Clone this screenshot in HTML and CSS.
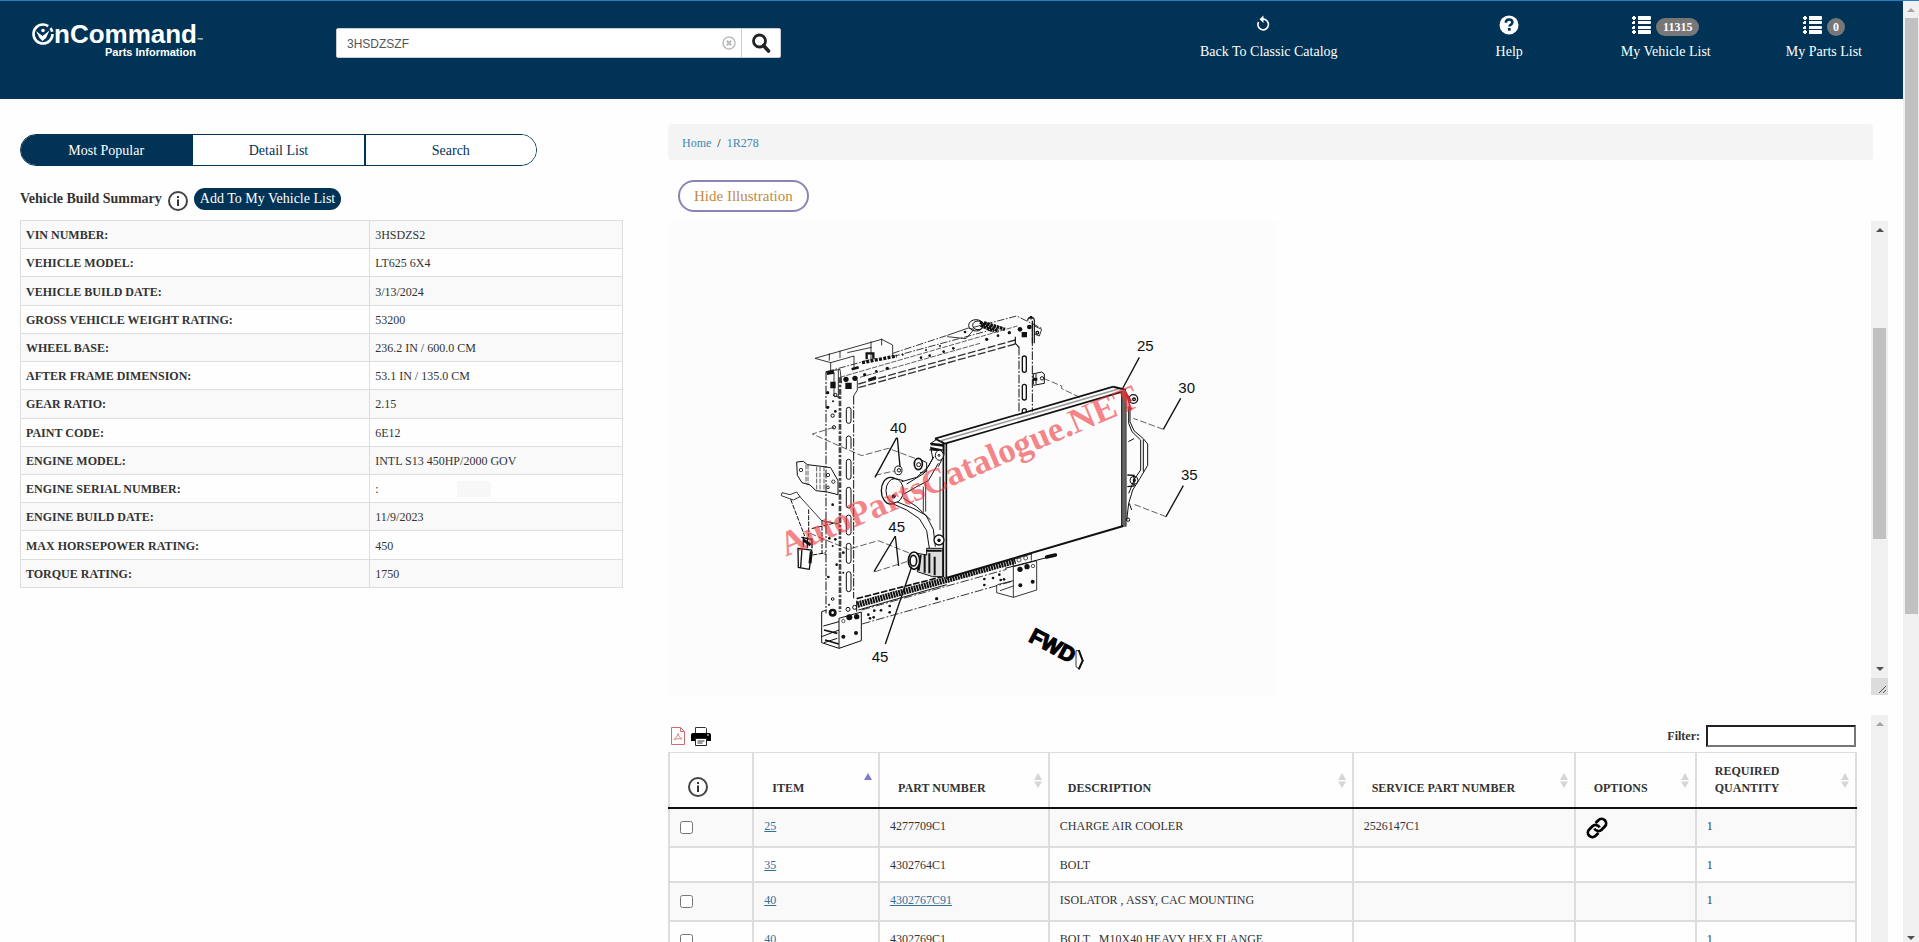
FILE: index.html
```html
<!DOCTYPE html>
<html lang="en">
<head>
<meta charset="utf-8">
<title>OnCommand Parts Information</title>
<link rel="stylesheet" href="styles.css">
</head>
<body>
<svg width="0" height="0" class="defs" aria-hidden="true">
  <symbol id="i-info" viewBox="0 0 20 20"><circle cx="10" cy="10" r="9" fill="#fff" stroke="#444" stroke-width="2"/><path d="M9 8.500h2v6.500h-2zM9 5h2v2h-2z" fill="#333"/></symbol>
  <symbol id="i-list" viewBox="0 0 20 18"><path d="M1 0h2v1h1v2h-1v1h-2v-1h-1v-2h1zM6 0h12q1 0 1 1v2q0 1-1 1h-12zM1 5h2v3h-3v-2h1zM6 5h12q1 0 1 1v1q0 1-1 1h-12zM1 10h2v3h-3v-2h1zM6 10h12q1 0 1 1v1q0 1-1 1h-12zM1 14h2v1h1v2h-1v1h-2v-1h-1v-2h1zM6 14h12q1 0 1 1v2q0 1-1 1h-12z" fill="#fff"/></symbol>
  <symbol id="i-sort" viewBox="0 0 8 15"><path d="M4 0l4 7h-8zM0 8.500h8l-4 6.500z" fill="#d5d5d5"/></symbol>
  <symbol id="i-up" viewBox="0 0 8 4"><path d="M4 0l4 4h-8z" fill="currentColor"/></symbol>
  <symbol id="i-down" viewBox="0 0 8 4"><path d="M0 0h8l-4 4z" fill="currentColor"/></symbol>
</svg>
<div class="shell">
  <div class="page">
    <header class="top">
      <a class="logo" href="#" aria-label="OnCommand Parts Information">
        <span class="logo-row">
          <svg width="22" height="22" viewBox="0 0 22 22"><circle cx="11" cy="11" r="9.500" fill="none" stroke="#fff" stroke-width="2.600" stroke-dasharray="50 3 4 3"/><circle cx="11" cy="7.500" r="1.800" fill="#fff"/><path d="M4 8l6.500 5 7-5.500-3.500 7.500-3.500 3-3-3z" fill="#fff"/></svg><span class="logo-name">nCommand</span><span class="logo-tm">™</span>
        </span>
        <span class="logo-sub">Parts Information</span>
      </a>
      <form class="search">
        <input type="text" value="3HSDZSZF" aria-label="Search">
        <button type="button" class="clear" aria-label="Clear"><svg width="14" height="14" viewBox="0 0 14 14" fill="none" stroke="#bbb"><circle cx="7" cy="7" r="6" stroke-width="1.500"/><path d="M4.800 4.800l4.400 4.400M9.200 4.800l-4.400 4.400" stroke-width="2"/></svg></button>
        <button type="button" class="go" aria-label="Go"><svg width="20" height="20" viewBox="0 0 20 20" fill="none" stroke="#222"><circle cx="8.500" cy="8" r="6" stroke-width="2.800"/><path d="M12.500 12.500l5 5.500" stroke-width="3.600" stroke-linecap="round"/></svg></button>
      </form>
      <nav class="links">
        <a href="#"><span class="ico"><svg width="14" height="17" viewBox="0 0 14 17"><path d="M2.500 7a5.300 5.300 0 1 0 4.500-2.800" fill="none" stroke="#fff" stroke-width="1.700"/><path d="M7.500 .500v7.500l-4-3.700z" fill="#fff"/></svg></span>Back To Classic Catalog</a>
        <a href="#" class="help"><span class="ico"><svg width="20" height="20" viewBox="0 0 20 20"><circle cx="10" cy="10" r="9.500" fill="#fff"/><path d="M6.800 7.800q0-3.400 3.300-3.400t3.300 2.800q0 1.500-1.500 2.400t-1.500 2" fill="none" stroke="#003355" stroke-width="2.500"/><path d="M8.900 13h2.800v2.700h-2.800z" fill="#003355"/></svg></span>Help</a>
        <a href="#" class="vehicles"><span class="ico"><svg width="20" height="18"><use href="#i-list"/></svg><b class="badge">11315</b></span>My Vehicle List</a>
        <a href="#" class="parts"><span class="ico"><svg width="20" height="18"><use href="#i-list"/></svg><b class="badge">0</b></span>My Parts List</a>
      </nav>
    </header>
    <main class="cols">
      <section class="left">
        <div class="tabs">
          <button type="button" class="on">Most Popular</button><button type="button">Detail List</button><button type="button">Search</button>
        </div>
        <div class="summary">
          <h2>Vehicle Build Summary</h2>
          <svg width="20" height="20"><use href="#i-info"/></svg>
          <button type="button">Add To My Vehicle List</button>
        </div>
        <table class="build">
          <tr><th scope="row">VIN NUMBER:</th><td>3HSDZS2</td></tr>
          <tr><th scope="row">VEHICLE MODEL:</th><td>LT625 6X4</td></tr>
          <tr><th scope="row">VEHICLE BUILD DATE:</th><td>3/13/2024</td></tr>
          <tr><th scope="row">GROSS VEHICLE WEIGHT RATING:</th><td>53200</td></tr>
          <tr><th scope="row">WHEEL BASE:</th><td>236.2 IN / 600.0 CM</td></tr>
          <tr><th scope="row">AFTER FRAME DIMENSION:</th><td>53.1 IN / 135.0 CM</td></tr>
          <tr><th scope="row">GEAR RATIO:</th><td>2.15</td></tr>
          <tr><th scope="row">PAINT CODE:</th><td>6E12</td></tr>
          <tr><th scope="row">ENGINE MODEL:</th><td>INTL S13 450HP/2000 GOV</td></tr>
          <tr><th scope="row">ENGINE SERIAL NUMBER:</th><td><div class="masked">:<i></i></div></td></tr>
          <tr><th scope="row">ENGINE BUILD DATE:</th><td>11/9/2023</td></tr>
          <tr><th scope="row">MAX HORSEPOWER RATING:</th><td>450</td></tr>
          <tr><th scope="row">TORQUE RATING:</th><td>1750</td></tr>
        </table>
      </section>
      <section class="right">
        <nav class="crumbs"><a href="#">Home</a><span>/</span><a href="#">1R278</a></nav>
        <button type="button" class="hide">Hide Illustration</button>
        <div class="viewer">
          <svg class="art" width="609" height="474" viewBox="-276 -207 1827 1422" fill="none" stroke="#111" stroke-width="3">
            <!-- top rail -->
            <path d="M165 205L365 148L398 165V196M165 205L212 218L282 198M212 218V245M262 188L335 172M282 198V232M208 190V212M240 182V204M333 154V210M365 146V166" stroke-width="2.500"/>
            <path d="M398 190L562 136M640 112L770 78L845 115M200 245L345 205M398 200L700 118" stroke-dasharray="22 5 5 5" stroke-width="2.500"/>
            <path d="M240 262L772 108M300 262L660 160" stroke-dasharray="16 4" stroke-width="2"/>
            <path d="M295 282L766 150M295 293L766 162" stroke-dasharray="24 7" stroke-width="4" stroke="#333"/>
            <path d="M562 136L625 114L642 118L618 146L562 140" stroke-width="2.500"/>
            <ellipse cx="648" cy="106" rx="22" ry="17"/><ellipse cx="654" cy="106" rx="16" ry="13"/><path d="M660 97L716 124M662 106L702 124M672 98L735 118" stroke-width="10" stroke-dasharray="8 2"/>
            <path d="M306 218L410 198" stroke-width="10" stroke-dasharray="9 4"/><path d="M320 208V190H340V206" stroke-width="7"/>
            <path d="M275 238L296 232M325 270L348 262" stroke-width="8"/>
            <g fill="#111" stroke="none"><circle cx="314" cy="254" r="5"/><circle cx="349" cy="244" r="4"/><circle cx="382" cy="235" r="5"/><circle cx="428" cy="194" r="3"/><circle cx="483" cy="203" r="4"/><circle cx="509" cy="197" r="4"/><circle cx="551" cy="185" r="4"/><circle cx="580" cy="175" r="4"/><circle cx="498" cy="180" r="3"/><circle cx="540" cy="168" r="3"/><circle cx="615" cy="126" r="4"/><circle cx="680" cy="148" r="5"/><circle cx="714" cy="137" r="4"/><circle cx="748" cy="128" r="5"/><circle cx="258" cy="268" r="8"/><circle cx="285" cy="265" r="8"/><path d="M256 278h19v19h-19zM211 275h16v20h-16zM785 126h16v16h-16z"/><circle cx="780" cy="118" r="7"/><circle cx="808" cy="111" r="7"/></g>
            <!-- left post -->
            <path d="M198 245V970M281 318V925" stroke-dasharray="26 5 6 5"/>
            <path d="M240 262V965" stroke-width="8" stroke-dasharray="17 5 8 5" stroke="#444"/>
            <path d="M235 240V325M222 248V318L240 322M198 245L240 238L245 280M292 270V300L281 318" stroke-width="2.500"/>
            <path d="M200 250L222 246" stroke-width="10"/>
            <g stroke-width="3"><rect x="259" y="352" width="14" height="48" rx="7"/><path d="M259 476V445a7 7 0 0 1 14 0V476"/><rect x="259" y="508" width="14" height="60" rx="7"/><rect x="259" y="592" width="14" height="62" rx="7"/><rect x="259" y="675" width="14" height="60" rx="7"/><rect x="259" y="760" width="14" height="60" rx="7"/><rect x="259" y="845" width="14" height="60" rx="7"/><circle cx="218" cy="377" r="5"/><circle cx="222" cy="412" r="5"/><circle cx="226" cy="315" r="5"/><circle cx="264" cy="958" r="6"/><circle cx="284" cy="952" r="6"/><circle cx="218" cy="927" r="4"/></g>
            <g fill="#111" stroke="none"><circle cx="203" cy="308" r="5"/><circle cx="203" cy="352" r="5"/><circle cx="226" cy="364" r="4"/><circle cx="219" cy="334" r="3"/><circle cx="218" cy="644" r="4"/><circle cx="208" cy="745" r="4"/><circle cx="226" cy="748" r="4"/><circle cx="218" cy="768" r="3"/><circle cx="250" cy="788" r="4"/><circle cx="230" cy="824" r="4"/><circle cx="205" cy="861" r="4"/><circle cx="250" cy="848" r="3"/><circle cx="207" cy="944" r="3"/></g>
            <!-- left brackets -->
            <path d="M110 516L130 514L142 524L192 530L212 533L234 572V614L202 606L168 602L150 585L126 578L112 556Z"/>
            <path d="M138 524V582M144 524V582M170 530V600M180 530V602M192 530V604" stroke-width="2" stroke-dasharray="14 4"/>
            <g stroke-width="2.500"><circle cx="123" cy="540" r="5"/><circle cx="204" cy="555" r="5"/><circle cx="220" cy="575" r="5"/><circle cx="204" cy="592" r="4"/></g>
            <path d="M66 608L90 614L110 606L120 620L100 630L64 617ZM118 618L185 692L238 702" stroke-width="2.500"/>
            <path d="M92 628L134 738M146 658V740M186 690V790L198 794M155 716L220 700M158 795L198 788" stroke-dasharray="14 4"/>
            <path d="M114 775L155 780L148 838L115 832ZM126 775L122 832M124 742L156 748V775M130 740V770M142 742V775" stroke-width="4"/><path d="M130 750L152 765M154 784L150 820" stroke-width="9"/>
            <!-- bottom rail -->
            <path d="M290 926L555 858" stroke-width="5" stroke-dasharray="20 5"/>
            <path d="M292 944L766 812" stroke-width="19" stroke-dasharray="6 2"/>
            <path d="M295 960L560 884M290 932V965"/>
            <path d="M305 960L740 838M306 1002L760 873" stroke-dasharray="26 6 6 6" stroke-width="2.500"/>
            <g fill="#111" stroke="none"><circle cx="325" cy="974" r="4"/><circle cx="343" cy="962" r="4"/><circle cx="330" cy="985" r="4"/><circle cx="341" cy="982" r="4"/><circle cx="363" cy="961" r="4"/><circle cx="389" cy="948" r="4"/><circle cx="389" cy="967" r="4"/><circle cx="530" cy="926" r="5"/><circle cx="673" cy="867" r="4"/><circle cx="673" cy="885" r="4"/><circle cx="699" cy="864" r="4"/><circle cx="718" cy="854" r="4"/><circle cx="722" cy="870" r="4"/><circle cx="732" cy="868" r="4"/></g>
            <!-- left foot -->
            <path d="M185 965V1058L237 1075L304 1052V966M185 965L200 960M237 985V1075M237 985L304 966M185 1040L237 1020M190 1008L237 995M192 1058L232 1045"/>
            <path d="M192 1020L232 1030M195 1050L236 1062" stroke-width="5"/>
            <circle cx="218" cy="968" r="8" stroke-width="8"/>
            <g fill="#111" stroke="none"><circle cx="268" cy="982" r="9"/><circle cx="290" cy="980" r="8"/><circle cx="250" cy="1040" r="6"/><circle cx="288" cy="1029" r="6"/></g><circle cx="250" cy="993" r="5" stroke-width="2"/>
            <!-- right post -->
            <path d="M777 170V368M817 100V365" stroke-dasharray="26 5 6 5"/><path d="M766 140V160L777 172M817 160V92M803 92a10 10 0 1 1 20 0V160" stroke-width="3.500"/>
            <circle cx="813" cy="83" r="4"/><path d="M823 108L845 118L838 138L822 132" stroke-width="2.500"/><circle cx="832" cy="128" r="4" stroke-width="4"/>
            <g stroke-width="4"><rect x="787" y="198" width="12" height="49" rx="6"/><rect x="787" y="283" width="12" height="47" rx="6"/><path d="M787 370V362a6 6 0 0 1 12 0V368"/></g>
            <path d="M817 252L845 246L853 252V280L820 286M820 252V284M828 252V282"/><path d="M818 268h14" stroke-width="9"/><circle cx="846" cy="265" r="5"/>
            <!-- right foot -->
            <path d="M760 808V922L830 900V812L760 830M710 885V908L760 922M712 884L760 872M760 808L814 792V812M720 902L760 888" stroke-width="2.500"/>
            <g fill="#111" stroke="none"><circle cx="780" cy="838" r="8"/><circle cx="801" cy="830" r="8"/><circle cx="781" cy="886" r="6"/><circle cx="818" cy="875" r="6"/></g>
            <circle cx="777" cy="810" r="6" stroke-width="2"/><circle cx="797" cy="804" r="6" stroke-width="2"/><circle cx="819" cy="828" r="5" stroke-width="2"/>
            <path d="M735 835L860 803"/><path d="M860 801L886 795" stroke-width="11" stroke-linecap="round"/>
            <!-- cooler core -->
            <path d="M556 458L1090 302V708L556 866Z" fill="#fcfcfc" stroke="none"/>
            <path d="M525 446L1060 290M555 461L1090 304M525 446L555 461" stroke-width="5"/><path d="M540 453L1075 297" stroke="#999" stroke-width="5"/>
            <path d="M1060 290L1098 300" stroke-width="6"/>
            <path d="M550 458V862M559 460V866" stroke-width="5"/>
            <path d="M1091 302V710" stroke="#666" stroke-width="12"/><path d="M1085 304V708M1098 304V710"/>
            <path d="M559 864L1090 708" stroke-width="6"/>
            <!-- right tank -->
            <path d="M1100 312L1110 350V395L1122 422L1150 446L1163 462V526L1140 565L1118 600L1106 640L1100 692M1106 350V400L1116 425L1142 450V540L1124 566L1106 610M1150 448V545" stroke-width="3"/>
            <circle cx="1120" cy="327" r="13" stroke-width="4"/><circle cx="1122" cy="328" r="4" stroke-width="4"/><path d="M1102 555L1122 556V588L1102 590" stroke-width="4"/><circle cx="1122" cy="571" r="12"/><circle cx="1123" cy="571" r="3" stroke-width="4"/><circle cx="1104" cy="689" r="5"/><path d="M1105 455L1122 446M1108 640L1115 660"/>
            <path d="M1095 308L1112 335M1105 350L1114 360" stroke="#c22" stroke-width="9"/>
            <!-- left tank -->
            <path d="M510 462L530 448L552 458V495L535 530M508 480H550M512 470L518 505L505 530L470 562L425 575M535 520L505 572L470 590L432 612M522 500L492 550L440 582"/>
            <path d="M512 475L545 482M512 462L550 466" stroke-width="8"/><ellipse cx="538" cy="496" rx="12" ry="15" fill="#fcfcfc"/><circle cx="537" cy="496" r="3"/>
            <ellipse cx="392" cy="602" rx="28" ry="40" fill="#fcfcfc" stroke-width="4"/><ellipse cx="404" cy="602" rx="26" ry="36" fill="#fcfcfc"/><path d="M392 562L430 572M400 642L440 660L478 686L500 722L508 775M412 636L462 656L498 676L520 718L526 770M430 624L470 650L512 690" />
            <circle cx="401" cy="619" r="5" fill="#111"/><path d="M490 590V668M497 580V665M540 560V720" stroke-width="2.500"/>
            <ellipse cx="475" cy="522" rx="12" ry="17" fill="#fcfcfc" stroke-width="5"/><circle cx="476" cy="524" r="6"/><path d="M484 510L500 518V545L480 548"/><ellipse cx="415" cy="541" rx="11" ry="13" fill="#fcfcfc"/><circle cx="417" cy="541" r="5"/>
            <circle cx="537" cy="750" r="15" fill="#fcfcfc" stroke-width="4"/><circle cx="537" cy="751" r="4" fill="#111"/>
            <path d="M500 775h48v85h-30L472 845V790L500 795Z" fill="#ddd"/><path d="M482 795L476 842M494 792V848M508 790V850M524 800V856M500 782H545" stroke-width="6"/>
            <ellipse cx="462" cy="812" rx="17" ry="26" fill="#fcfcfc" stroke-width="5"/><ellipse cx="460" cy="812" rx="10" ry="16" stroke-width="5"/>
            <!-- callout leaders -->
            <path d="M222 412L157 432L305 497L385 475L470 507M345 556L402 543M150 730L265 778L355 752L450 790M345 845L450 812M850 265L905 288V296L960 322M1210 418L1120 385M1218 680L1120 642" stroke-dasharray="20 7" stroke-width="2"/>
            <path d="M410 443L345 562M412 443L420 530M1138 202L1087 297M1262 325L1210 418M1270 587L1218 680M406 738L342 845M406 738L416 828M455 830L376 1062" stroke-width="4"/>
            <path d="M948 1082V1130L958 1137L969 1112L958 1082Z" stroke-width="2.500"/><path d="M956 1080L968 1112L956 1138" stroke-width="6"/>
            <g class="nums" stroke="none"><text x="390" y="428">40</text><text x="1131" y="184">25</text><text x="1255" y="308">30</text><text x="1263" y="569">35</text><text x="385" y="725">45</text><text x="335" y="1115">45</text></g>
            <text class="fwd" transform="translate(803 1052) rotate(28)">FWD</text>
            <text class="mark" transform="translate(77 800) rotate(-23)">AutoPartsCatalogue.NET</text>
          </svg>
          <div class="side">
            <div class="bar"><svg width="8" height="4"><use href="#i-up"/></svg><div class="thumb mid"></div><svg width="8" height="4"><use href="#i-down"/></svg></div>
            <div class="grip"><svg width="17" height="17" viewBox="0 0 17 17" stroke="#555"><path d="M8 15l7-7M12 15l3-3"/></svg></div>
          </div>
        </div>
        <div class="list">
          <div class="list-body">
            <div class="tools">
              <a href="#" aria-label="PDF"><svg width="14" height="18" viewBox="0 0 14 18" fill="none" stroke="#cf6b6e"><path d="M.500 .500h9l4 4v13h-13zM9.500 .500v4h4"/><path d="M3 12.500q3-2 4-6q0 3 4 5.500q-4-1-8 .500z" stroke-width=".8"/></svg></a>
              <a href="#" aria-label="Print"><svg width="20" height="19" viewBox="0 0 20 19"><path d="M4.500 6v-5.500h10l1 1v5" fill="#fff" stroke="#333"/><path d="M2 6h16q2 0 2 2v6h-20v-6q0-2 2-2z"/><path d="M4.500 11.500h11v7h-11z" fill="#fff" stroke="#222"/><path d="M6.500 14h7M6.500 16h5" stroke="#333"/><path d="M16 8h2" stroke="#fff"/></svg></a>
              <label for="filter">Filter:</label><input id="filter" type="text">
            </div>
            <table class="partlist">
              <colgroup><col class="c1"><col class="c2"><col class="c3"><col class="c4"><col class="c5"><col class="c6"><col class="c7"></colgroup>
              <thead><tr>
                <th scope="col"><svg class="inf" width="20" height="20"><use href="#i-info"/></svg></th>
                <th scope="col">ITEM<svg class="sort" width="8" height="15" viewBox="0 0 8 15"><path d="M4 0l4 7h-8z" fill="#7b7bd0"/></svg></th>
                <th scope="col">PART NUMBER<svg class="sort" width="8" height="15"><use href="#i-sort"/></svg></th>
                <th scope="col">DESCRIPTION<svg class="sort" width="8" height="15"><use href="#i-sort"/></svg></th>
                <th scope="col">SERVICE PART NUMBER<svg class="sort" width="8" height="15"><use href="#i-sort"/></svg></th>
                <th scope="col">OPTIONS<svg class="sort" width="8" height="15"><use href="#i-sort"/></svg></th>
                <th scope="col">REQUIRED<br>QUANTITY<svg class="sort" width="8" height="15"><use href="#i-sort"/></svg></th>
              </tr></thead>
              <tbody>
                <tr><td><input type="checkbox" aria-label="Select 4277709C1"></td><td><a href="#">25</a></td><td>4277709C1</td><td>CHARGE AIR COOLER</td><td>2526147C1</td><td><svg class="chain" width="24" height="24" viewBox="0 0 24 24" fill="none" stroke="#000" stroke-width="2.800"><g transform="rotate(-45 12 12)"><path d="M9.500 16.500h-4a4.500 4.500 0 0 1 0-9h4.500a4.500 4.500 0 0 1 4.200 6"/><path d="M14.500 7.500h4a4.500 4.500 0 0 1 0 9h-4.500a4.500 4.500 0 0 1-4.200-6"/></g></svg></td><td>1</td></tr>
                <tr><td></td><td><a href="#">35</a></td><td>4302764C1</td><td>BOLT</td><td></td><td></td><td>1</td></tr>
                <tr><td><input type="checkbox" aria-label="Select 4302767C91"></td><td><a href="#">40</a></td><td><a href="#">4302767C91</a></td><td>ISOLATOR , ASSY, CAC MOUNTING</td><td></td><td></td><td>1</td></tr>
                <tr><td><input type="checkbox" aria-label="Select 4302769C1"></td><td><a href="#">40</a></td><td>4302769C1</td><td>BOLT , M10X40 HEAVY HEX FLANGE</td><td></td><td></td><td>1</td></tr>
              </tbody>
            </table>
          </div>
          <div class="bar faint"><svg width="8" height="4"><use href="#i-up"/></svg></div>
        </div>
      </section>
    </main>
  </div>
  <div class="bar window"><svg class="pale" width="8" height="4"><use href="#i-up"/></svg><div class="thumb main"></div><svg class="end" width="8" height="4"><use href="#i-down"/></svg></div>
</div>
</body>
</html>
```
FILE: styles.css
```css
* { box-sizing: border-box; }
body { margin: 0; font: 14px/20px "Liberation Serif", serif; color: #333; background: #fefefe; }
button, input { font: inherit; color: inherit; margin: 0; }
svg { display: block; flex: none; }
a { color: #337099; }
.defs { position: absolute; }
.shell { display: flex; height: 100vh; overflow: hidden; border-top: 1px solid #2a7cc0; }
.page { flex: 1; min-width: 0; }

.top { display: flex; align-items: flex-start; height: 98px; background: #003355; padding: 0 41px 0 32px; }
.logo { display: block; width: 304px; padding-top: 20px; color: #fff; text-decoration: none; font-family: "Liberation Sans", sans-serif; font-weight: bold; }
.logo-row { display: flex; align-items: flex-end; height: 25px; }
.logo-row svg { align-self: center; }
.logo-name { font-size: 26px; line-height: 24px; }
.logo-tm { font-size: 6px; line-height: 12px; }
.logo-sub { display: block; width: 164px; text-align: right; font-size: 11px; line-height: 13px; }
.search { display: flex; width: 445px; height: 30px; margin-top: 27px; background: #fff; border: 1px solid #ccc; border-radius: 2px; align-items: center; }
.search input { flex: 1; min-width: 0; border: 0; outline: 0; background: none; padding: 2px 10px 0; font: 12px "Liberation Sans", sans-serif; color: #555; }
.search button { border: 0; background: none; padding: 0; }
.search .clear { margin-right: 5px; }
.search .go { width: 39px; height: 28px; border-left: 1px solid #ccc; padding-left: 9px; }
.links { display: flex; margin-left: auto; }
.links a { color: #fff; text-decoration: none; text-align: center; }
.links .ico { display: flex; align-items: center; justify-content: center; height: 32px; margin: 8px 0 1px; gap: 4px; }
.links a:first-child .ico { padding: 0 12px 4px 0; }
.links .help { margin-left: 158px; }
.links .vehicles { margin-left: 98px; }
.links .parts { margin-left: 75px; }
.badge { background: #777; border-radius: 10px; font-size: 12px; line-height: 18px; padding: 0 7px; margin-top: 4px; }
.links .parts .badge { padding: 0 6px; }

.cols { display: grid; grid-template-columns: 603fr 1220fr; column-gap: 45px; padding: 0 15px 0 20px; }
.left { padding-top: 35px; }
.tabs { display: flex; width: 86%; max-width: 517px; height: 32px; border: 1px solid #003355; border-radius: 16px; overflow: hidden; }
.tabs button { flex: 1; border: 0; border-left: 2px solid #003355; background: #fff; color: #003355; padding: 2px 0 0; }
.tabs button:first-child { border-left: 0; }
.tabs .on { background: #003355; color: #fff; }
.summary { display: flex; align-items: center; gap: 6px; height: 24px; margin: 20px 0 10px; }
.summary h2 { margin: 2px 0 0; font-size: 14px; }
.summary svg { margin-top: 5px; }
.summary button { height: 22px; margin-top: 1px; border: 0; border-radius: 11px; background: #003355; color: #fff; padding: 0 6px; line-height: 22px; }
table { border-collapse: collapse; table-layout: fixed; width: 100%; font-size: 12px; line-height: 16px; }
.build { height: 368px; }
.build th, .build td { border: 1px solid #ddd; padding: 6px 5px 5px; text-align: left; }
.build th { width: 58%; }
.build tr:nth-child(odd), .partlist tbody tr:nth-child(odd) { background: #f9f9f9; }
.masked { display: flex; }
.masked i { width: 34px; background: #f7f7f7; margin-left: 78px; }

.right { padding-top: 25px; min-width: 0; }
.crumbs { height: 36px; margin-right: 15px; padding: 0 14px; background: #f4f4f4; border-radius: 4px; font-size: 12px; line-height: 38px; display: flex; gap: 6px; }
.crumbs a { text-decoration: none; color: #4387b0; }
.crumbs span { color: #000; }
.hide { display: block; height: 32px; margin: 20px 0 9px 10px; padding: 0 14px; border: 2px solid #8f82b5; border-radius: 16px; background: #fff; color: #c08a3e; font-size: 15px; line-height: 26px; }
.viewer { display: flex; justify-content: space-between; height: 474px; }
.art { background: #fcfcfc; }
.nums { fill: #111; font: 45px "Liberation Sans", sans-serif; }
.fwd { fill: #000; stroke: #000; stroke-width: 4px; font: bold 64px "Liberation Sans", sans-serif; }
.mark { fill: #ee3338; fill-opacity: .6; stroke: none; font: bold 105px "Liberation Serif", serif; }
.side { display: flex; flex-direction: column; }
.bar { display: flex; flex-direction: column; align-items: center; width: 17px; flex: none; background: #f0f0f0; color: #505050; padding: 7px 0; }
.side .bar { flex: 1; justify-content: space-between; }
.thumb { width: 13px; background: #c1c1c1; }
.thumb.mid { height: 211px; margin-bottom: 32px; }
.grip { height: 17px; background: #dcdcdc; }
.list { display: flex; gap: 14px; margin-top: 20px; }
.list-body { flex: 1; min-width: 0; padding-top: 9px; }
.bar.faint { min-height: 300px; color: #a3a3a3; }
.bar.window { width: 16px; padding: 7px 0 2px; }
.bar .pale { color: #a3a3a3; }
.thumb.main { height: 64%; margin-top: 6px; }
.bar .end { margin-top: auto; }

.tools { display: flex; align-items: center; gap: 6px; height: 24px; padding: 0 1px 0 3px; margin-bottom: 4px; }
.tools label { margin-left: auto; font-weight: bold; font-size: 12px; }
.tools input { width: 150px; height: 22px; border: 2px solid #767676; border-top-color: #222; border-left-color: #222; background: #fff; }
.partlist th, .partlist td { border: 2px solid #ddd; text-align: left; }
.partlist th { position: relative; height: 55px; padding: 8px 17px 10px 18px; vertical-align: bottom; line-height: 17px; border-top-width: 1px; border-bottom-color: #111; }
.partlist td { height: 39px; padding: 9px 9px 7px 10px; vertical-align: top; }
.partlist tr:nth-child(2) td { height: 35px; }
.partlist input { display: block; width: 13px; height: 13px; margin: 3px 0 0; }
.sort { position: absolute; right: 6px; top: 20px; }
.chain { margin: -2px 0 -8px -1px; }
.c1 { width: 7.1%; }
.c2 { width: 10.6%; }
.c3 { width: 14.3%; }
.c4 { width: 25.6%; }
.c5 { width: 18.7%; }
.c6 { width: 10.2%; }
.c7 { width: 13.5%; }
```
